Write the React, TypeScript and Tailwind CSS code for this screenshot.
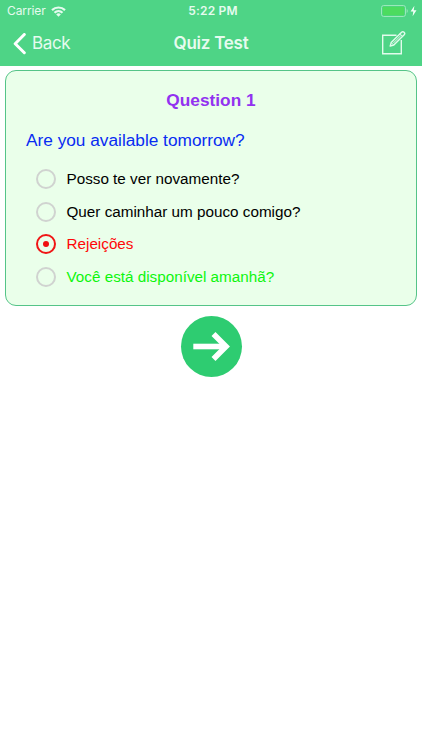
import React, { useState } from 'react';

interface Answer {
  label: string;
  color: string;
}

const answers: Answer[] = [
  { label: 'Posso te ver novamente?', color: 'text-black' },
  { label: 'Quer caminhar um pouco comigo?', color: 'text-black' },
  { label: 'Rejeições', color: 'text-[#ff0808]' },
  { label: 'Você está disponível amanhã?', color: 'text-[#0df50d]' },
];

function StatusBar() {
  return (
    <div className="grid h-[22px] grid-cols-[1fr_auto_1fr] items-center pl-[7px] pr-[5px] text-[12px] leading-none">
      <div className="flex items-center gap-[5px] text-[#e6fbef]">
        <span className="tracking-[-0.1px]">Carrier</span>
        <svg width="15" height="11" viewBox="0 0 15 11" fill="none" stroke="currentColor" strokeWidth="2.2">
          <path d="M1 4.1a9.4 9.4 0 0 1 13 0" />
          <path d="M3.5 6.7a5.8 5.8 0 0 1 8 0" />
          <path d="M7.5 10.7 5.2 8.4a3.2 3.2 0 0 1 4.6 0z" fill="currentColor" stroke="none" />
        </svg>
      </div>
      <span className="pl-[2px] text-center font-semibold tracking-[0.2px] text-[#e6fbef]">5:22 PM</span>
      <div className="flex items-center justify-end">
        <svg width="36" height="12" viewBox="0 0 36 12">
          <rect x="0.5" y="0.5" width="24" height="11" rx="2.2" fill="none" stroke="#9be8bb" />
          <rect x="1.8" y="1.8" width="21.4" height="8.4" rx="1" fill="#4cdb5f" />
          <path d="M25.7 4v4c1.4-.6 1.4-3.4 0-4z" fill="#9be8bb" />
          <path d="M33.4 0.8 29.6 6.6h2.7L31.6 11.2 35.5 5.3h-2.8z" fill="#f2fff7" />
        </svg>
      </div>
    </div>
  );
}

function NavBar() {
  return (
    <div className="grid h-[44px] grid-cols-[1fr_auto_1fr] items-center pl-[13px] pr-[16px]">
      <button className="flex items-center gap-[6px] text-[17px] leading-none text-[#e6fbef]">
        <svg width="13" height="22" viewBox="0 0 13 22" fill="none" stroke="#fff" strokeWidth="3" strokeLinecap="round" strokeLinejoin="round">
          <path d="M11.3 1.5 2.2 10.7l9.1 9" />
        </svg>
        <span className="-mt-px tracking-[-0.35px]">Back</span>
      </button>
      <h1 className="-mt-px pl-[3px] text-[17px] font-semibold leading-none tracking-[-0.25px] text-[#e6fbef]">Quiz Test</h1>
      <button className="-mt-[3px] justify-self-end">
        <svg width="25" height="25" viewBox="0 0 25 25" fill="none" stroke="#e2fbec" strokeWidth="1.4">
          <path d="M15.5 5.2H1.7V23.8H20.3V10" />
          <path d="M9.2 16 10.2 12.6 20.6 2.2q1.2-1.1 2.5.1t.1 2.500L12.800 15.100z" strokeLinejoin="round" />
          <path d="M19 3.800 21.500 6.300M10.300 12.700l2.400 2.400M12.200 13.200l8-8" strokeWidth="1" />
        </svg>
      </button>
    </div>
  );
}

export default function App() {
  const [selected, setSelected] = useState(2);

  return (
    <div className="min-h-[750px] w-full bg-white font-['Liberation_Sans',Arial,sans-serif]">
      <header className="h-[66px] bg-[#4ed486] font-['Inter',sans-serif]">
        <StatusBar />
        <NavBar />
      </header>

      <main className="flex flex-col items-center px-[5px] pt-[4px]">
        {/* Question card */}
        <section className="h-[236px] w-full rounded-[11px] border-[1.5px] border-[#55c488] bg-[#eaffea] px-[20px] pt-[18px]">
          <h2 className="text-center text-[17.3px] font-bold leading-[22px] text-[#9232f0]">Question 1</h2>
          <p className="mt-[18px] text-[17.25px] leading-[22px] text-[#082cf2]">Are you available tomorrow?</p>

          <div className="mt-[12px] flex flex-col pl-[10px]">
            {answers.map((answer, index) => (
              <button
                key={answer.label}
                onClick={() => setSelected(index)}
                className="flex h-[32.6px] items-center gap-[10.5px] text-left"
              >
                <span
                  className={`flex size-[20px] items-center justify-center rounded-full border-2 ${selected === index ? 'border-[#f01515]' : 'border-[#d0d3d0]'}`}
                >
                  {selected === index && <span className="size-[6px] rounded-full bg-[#f01010]" />}
                </span>
                <span className={`text-[15.25px] leading-[20px] ${answer.color}`}>{answer.label}</span>
              </button>
            ))}
          </div>
        </section>

        {/* Next question */}
        <button className="mt-[10px] flex size-[61px] items-center justify-center rounded-full bg-[#2ecc71]">
          <svg width="61" height="61" viewBox="0 0 61 61" fill="none" stroke="#fff" strokeWidth="5.6">
            <path d="M12.3 30.5H44" />
            <path d="M32.500 18 45 30.500 32.500 43" />
          </svg>
        </button>
      </main>
    </div>
  );
}
